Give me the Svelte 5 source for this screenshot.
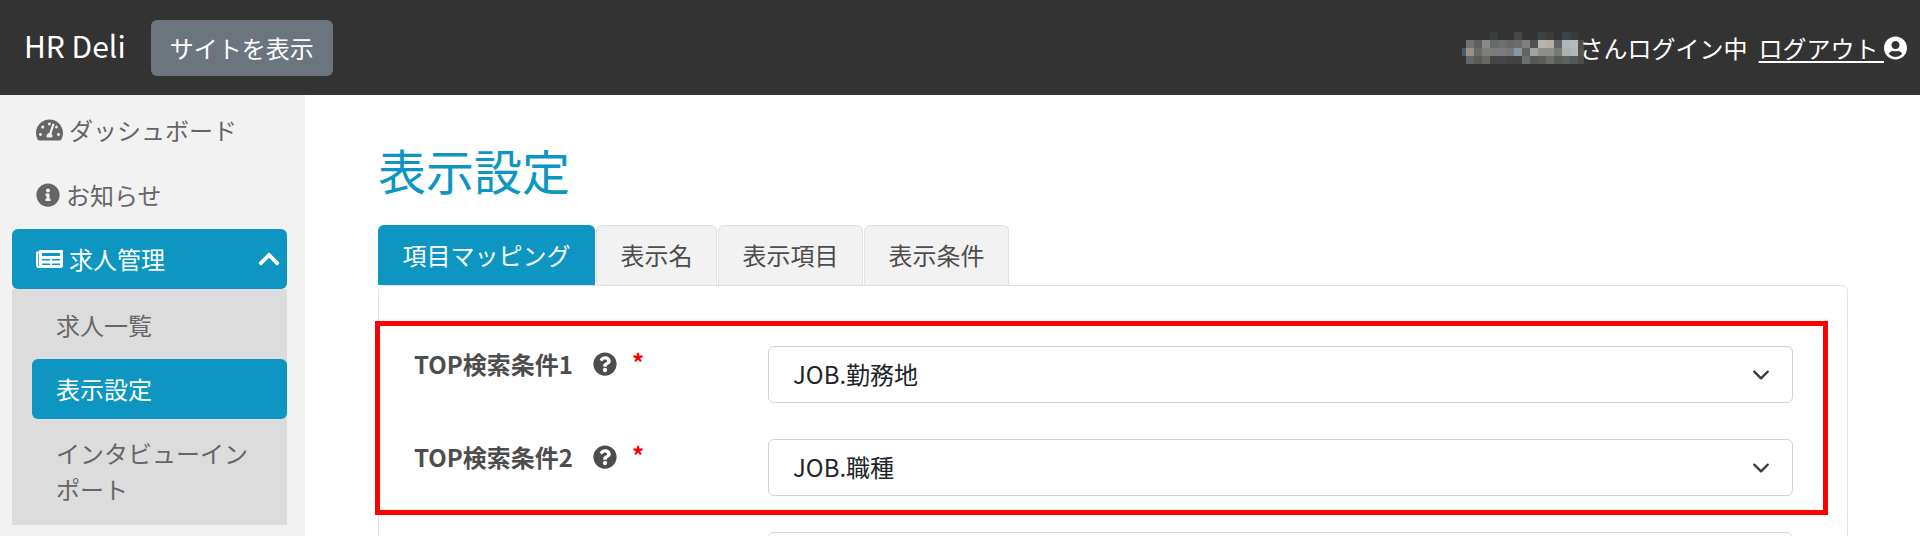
<script>
  // Blurred user name in the header, one row of colours per mosaic row
  const mosaicColumns = [4, 8, 8, 8, 8, 8, 8, 8, 8, 8, 8, 8, 8, 8, 8, 6];
  const mosaic = [
    ['#333', '#333', '#333', '#333', '#3b3c3c', '#333', '#333', '#474747', '#333', '#333', '#3a4245', '#3d3b39', '#333', '#3a4448', '#3a3a3a', '#333'],
    ['#333', '#6e7477', '#5f605c', '#8a8a84', '#66686a', '#6b7073', '#66686a', '#6e6c6a', '#7c8184', '#52524d', '#b3b5b0', '#b3afa6', '#5f6361', '#aeb6ba', '#b5babc', '#514e46'],
    ['#4a5a68', '#99908a', '#696c64', '#807e76', '#7d7b7b', '#7e7a80', '#7a787a', '#8797a3', '#68645f', '#9ea4a2', '#908e8a', '#908f90', '#777b75', '#adb1aa', '#b0b7ba', '#55524a'],
    ['#333', '#62686a', '#5b5a58', '#6a6860', '#454545', '#464646', '#434343', '#434343', '#6c6f70', '#55585a', '#5f5c55', '#6a6d6e', '#5a5a57', '#5f6160', '#555858', '#4f4c45']
  ];

  const tabs = ['項目マッピング', '表示名', '表示項目', '表示条件'];
  const subItems = ['求人一覧', '表示設定', 'インタビューインポート'];
  const rows = [
    { label: 'TOP検索条件1', value: 'JOB.勤務地' },
    { label: 'TOP検索条件2', value: 'JOB.職種' }
  ];

  const questionPath = 'M504 256c0 136.997-111.043 248-248 248S8 392.997 8 256C8 119.083 119.043 8 256 8s248 111.083 248 248zM262.655 90c-54.497 0-89.255 22.957-116.549 63.758-3.536 5.286-2.353 12.415 2.715 16.258l34.699 26.31c5.205 3.947 12.621 3.008 16.665-2.122 17.864-22.658 30.113-35.797 57.303-35.797 20.429 0 45.698 13.148 45.698 32.958 0 14.976-12.363 22.667-32.534 33.976C247.128 238.528 216 254.941 216 296v4c0 6.627 5.373 12 12 12h56c6.627 0 12-5.373 12-12v-1.333c0-28.462 83.186-29.647 83.186-106.667 0-58.002-60.165-102-116.531-102zM256 338c-25.365 0-46 20.635-46 46 0 25.364 20.635 46 46 46s46-20.636 46-46c0-25.365-20.635-46-46-46z';
</script>

<div class="page">
  <header class="topbar">
    <div class="brand">HR Deli</div>
    <button class="site-btn">サイトを表示</button>
    <div class="user">
      <div class="mosaic" style="grid-template-columns: {mosaicColumns.map((w) => w + 'px').join(' ')}">
        {#each mosaic as row}
          {#each row as color}
            <span style="background: {color}"></span>
          {/each}
        {/each}
      </div>
      <span class="login">さんログイン中</span>
      <span class="logout">ログアウト&nbsp;</span>
      <svg class="user-icon" viewBox="0 0 496 512"><path fill="currentColor" d="M248 8C111 8 0 119 0 256s111 248 248 248 248-111 248-248S385 8 248 8zm0 96c48.6 0 88 39.4 88 88s-39.4 88-88 88-88-39.4-88-88 39.4-88 88-88zm0 344c-58.7 0-111.3-26.6-146.5-68.2 18.8-35.4 55.6-59.8 98.5-59.8 2.4 0 4.8.4 7.1 1.1 13 4.2 26.6 6.9 40.9 6.9 14.3 0 28-2.7 40.9-6.9 2.3-.7 4.7-1.1 7.1-1.1 42.9 0 79.7 24.4 98.5 59.8C359.3 421.4 306.7 448 248 448z"/></svg>
    </div>
  </header>

  <div class="body">
    <nav class="sidebar">
      <div class="nav-item">
        <svg class="icon wide" viewBox="0 0 576 512"><path fill="currentColor" d="M288 32C128.94 32 0 160.94 0 320c0 52.8 14.25 102.26 39.06 144.8 5.61 9.62 16.3 15.2 27.44 15.2h443c11.14 0 21.83-5.58 27.44-15.2C561.75 422.26 576 372.8 576 320c0-159.06-128.94-288-288-288zm0 64c14.71 0 26.58 10.13 30.32 23.65-1.11 2.26-2.64 4.23-3.45 6.67l-9.22 27.67c-5.13 3.49-10.97 6.01-17.64 6.01-17.67 0-32-14.33-32-32S270.33 96 288 96zM96 384c-17.67 0-32-14.33-32-32s14.33-32 32-32 32 14.33 32 32-14.33 32-32 32zm48-160c-17.67 0-32-14.33-32-32s14.33-32 32-32 32 14.33 32 32-14.33 32-32 32zm246.77-72.41l-61.33 184C343.13 347.33 352 364.54 352 384c0 11.72-3.38 22.55-8.88 32H232.88c-5.5-9.45-8.88-20.28-8.88-32 0-33.94 26.5-61.43 59.9-63.59l61.34-184.01c4.17-12.56 17.73-19.45 30.36-15.17 12.57 4.19 19.35 17.79 15.17 30.36zm14.66 57.2l15.52-46.55c3.47-1.29 7.13-2.23 11.05-2.23 17.67 0 32 14.33 32 32s-14.33 32-32 32c-11.38-.01-20.89-6.28-26.57-15.22zM480 384c-17.67 0-32-14.33-32-32s14.33-32 32-32 32 14.33 32 32-14.33 32-32 32z"/></svg>
        ダッシュボード
      </div>
      <div class="nav-item">
        <svg class="icon" viewBox="0 0 512 512"><path fill="currentColor" d="M256 8C119.043 8 8 119.083 8 256c0 136.997 111.043 248 248 248s248-111.003 248-248C504 119.083 392.957 8 256 8zm0 110c23.196 0 42 18.804 42 42s-18.804 42-42 42-42-18.804-42-42 18.804-42 42-42zm56 254c0 6.627-5.373 12-12 12h-88c-6.627 0-12-5.373-12-12v-24c0-6.627 5.373-12 12-12h12v-64h-12c-6.627 0-12-5.373-12-12v-24c0-6.627 5.373-12 12-12h64c6.627 0 12 5.373 12 12v100h12c6.627 0 12 5.373 12 12v24z"/></svg>
        お知らせ
      </div>
      <div class="nav-item open">
        <svg class="icon wide" viewBox="0 0 576 512"><path fill="currentColor" d="M552 64H88c-13.255 0-24 10.745-24 24v8H24c-13.255 0-24 10.745-24 24v272c0 30.928 25.072 56 56 56h472c26.51 0 48-21.49 48-48V88c0-13.255-10.745-24-24-24zM56 400a8 8 0 0 1-8-8V144h16v248a8 8 0 0 1-8 8zm236-16H140c-6.627 0-12-5.373-12-12v-8c0-6.627 5.373-12 12-12h152c6.627 0 12 5.373 12 12v8c0 6.627-5.373 12-12 12zm208 0H348c-6.627 0-12-5.373-12-12v-8c0-6.627 5.373-12 12-12h152c6.627 0 12 5.373 12 12v8c0 6.627-5.373 12-12 12zm-208-96H140c-6.627 0-12-5.373-12-12v-8c0-6.627 5.373-12 12-12h152c6.627 0 12 5.373 12 12v8c0 6.627-5.373 12-12 12zm208 0H348c-6.627 0-12-5.373-12-12v-8c0-6.627 5.373-12 12-12h152c6.627 0 12 5.373 12 12v8c0 6.627-5.373 12-12 12zm0-96H140c-6.627 0-12-5.373-12-12v-40c0-6.627 5.373-12 12-12h360c6.627 0 12 5.373 12 12v40c0 6.627-5.373 12-12 12z"/></svg>
        求人管理
        <svg class="chevron-up" viewBox="0 0 448 512"><path fill="currentColor" d="M240.971 130.524l194.343 194.343c9.373 9.373 9.373 24.569 0 33.941l-22.667 22.667c-9.357 9.357-24.522 9.375-33.901.04L224 227.495 69.255 381.516c-9.379 9.335-24.544 9.317-33.901-.04l-22.667-22.667c-9.373-9.373-9.373-24.569 0-33.941L207.03 130.525c9.372-9.373 24.568-9.373 33.941-.001z"/></svg>
      </div>
      <div class="sub-panel">
        {#each subItems as item, i}
          <div class="sub-item" class:active={i === 1}>{item}</div>
        {/each}
      </div>
    </nav>

    <main class="main">
      <h1>表示設定</h1>
      <div class="tabs">
        {#each tabs as tab, i}
          <div class="tab" class:active={i === 0}>{tab}</div>
        {/each}
      </div>
      <div class="card">
        <div class="highlighted">
          {#each rows as row}
            <div class="form-row">
              <div class="label">
                <span class="label-text">{row.label}</span>
                <svg class="help" viewBox="0 0 512 512"><path fill="currentColor" d={questionPath}/></svg>
                <span class="required">*</span>
              </div>
              <div class="select">
                <span class="select-value">{row.value}</span>
                <svg class="chevron-down" viewBox="0 0 16 16"><path fill="none" stroke="currentColor" stroke-linecap="round" stroke-linejoin="round" stroke-width="2" d="M2 5l6 6 6-6"/></svg>
              </div>
            </div>
          {/each}
        </div>
        <div class="form-row">
          <div class="label"></div>
          <div class="select"></div>
        </div>
      </div>
    </main>
  </div>
</div>

<style>
  :global(body) {
    margin: 0;
    background: #fff;
  }

  .page {
    height: 536px;
    overflow: hidden;
    display: flex;
    flex-direction: column;
    font-family: "Noto Sans CJK JP", "Noto Sans", sans-serif;
    font-size: 24px;
    line-height: 36px;
    color: #4d4d4d;
  }

  .topbar {
    flex: 0 0 95px;
    display: flex;
    align-items: center;
    background: #333;
    color: #fff;
    padding: 0 13px 0 24px;
  }

  .brand {
    margin-right: 25px;
    margin-top: -5px;
    font-size: 30px;
  }

  .site-btn {
    height: 56px;
    padding: 0 19px;
    border: 0;
    border-radius: 6px;
    background: #6c757d;
    color: #fff;
    font: inherit;
  }

  .user {
    margin-left: auto;
    display: flex;
    align-items: center;
  }

  .mosaic {
    display: grid;
    grid-auto-rows: 8px;
    margin-right: -4px;
  }

  .login {
    margin-right: 11px;
  }

  .logout {
    text-decoration: underline;
    text-underline-offset: 3px;
  }

  .user-icon {
    width: 23px;
    height: 24px;
  }

  .body {
    flex: 1;
    display: flex;
    min-height: 0;
  }

  .sidebar {
    flex: 0 0 305px;
    box-sizing: border-box;
    padding: 5px 18px 0 12px;
    background: #f2f2f2;
    color: #666;
  }

  .nav-item {
    display: flex;
    align-items: center;
    gap: 6px;
    height: 60px;
    margin-bottom: 4px;
    padding-left: 24px;
    border-radius: 6px 6px 0 0;
  }

  .nav-item + .nav-item {
    padding-top: 1px;
  }

  .nav-item.open {
    margin: 0;
    padding-top: 0;
    background: #0d96c1;
    color: #fff;
    border-radius: 6px;
  }

  .icon {
    width: 24px;
    height: 24px;
    flex: none;
  }

  .icon.wide {
    width: 27px;
  }

  .chevron-up {
    width: 22px;
    height: 24px;
    margin-left: auto;
    margin-right: 7px;
  }

  .sub-panel {
    display: flex;
    flex-direction: column;
    gap: 4px;
    padding: 6px 0 6px 20px;
    background: #dcdcdc;
  }

  .sub-item {
    padding: 12px 24px;
    border-radius: 6px;
  }

  .sub-item.active {
    background: #0d96c1;
    color: #fff;
  }

  .main {
    flex: 1;
    min-width: 0;
    padding: 0 72px 0 73px;
  }

  h1 {
    margin: 38px 0 22px;
    font-size: 48px;
    line-height: 72px;
    font-weight: 400;
    color: #0d96c1;
  }

  .tabs {
    display: flex;
    gap: 1px;
    margin-top: -2px;
  }

  .tab {
    height: 60px;
    box-sizing: border-box;
    padding: 11px 23.5px 0;
    border: 1px solid #dee2e6;
    border-bottom: 0;
    border-radius: 6px 6px 0 0;
    background: #f2f2f2;
  }

  .tab.active {
    background: #0d96c1;
    border-color: #0d96c1;
    color: #fff;
  }

  .card {
    display: flex;
    flex-direction: column;
    gap: 36px;
    padding: 60px 54px 30px 35px;
    border: 1px solid #dee2e6;
    border-radius: 6px;
  }

  .highlighted {
    position: relative;
    display: flex;
    flex-direction: column;
    gap: 36px;
  }

  /* red annotation frame drawn over the first two rows */
  .highlighted::after {
    content: '';
    position: absolute;
    inset: -25px -35px -19px -39px;
    border: 5px solid #f00;
    pointer-events: none;
  }

  .form-row {
    display: flex;
  }

  .label {
    flex: 0 0 354px;
    display: flex;
    align-items: center;
    height: 36px;
    font-weight: 500;
  }

  .label-text {
    font-weight: 700;
  }

  .help {
    width: 24px;
    height: 24px;
    margin-left: 20px;
    flex: none;
  }

  .required {
    margin-left: 15px;
    margin-top: -4px;
    color: #f00;
    font-weight: 700;
  }

  .select {
    flex: 1;
    display: flex;
    align-items: center;
    height: 57px;
    box-sizing: border-box;
    padding: 0 22px 0 24px;
    border: 1px solid #ced4da;
    border-radius: 6px;
    color: #212529;
  }

  .select-value {
    margin-top: -2px;
  }

  .chevron-down {
    width: 18px;
    height: 18px;
    margin-left: auto;
    color: #343a40;
  }
</style>
